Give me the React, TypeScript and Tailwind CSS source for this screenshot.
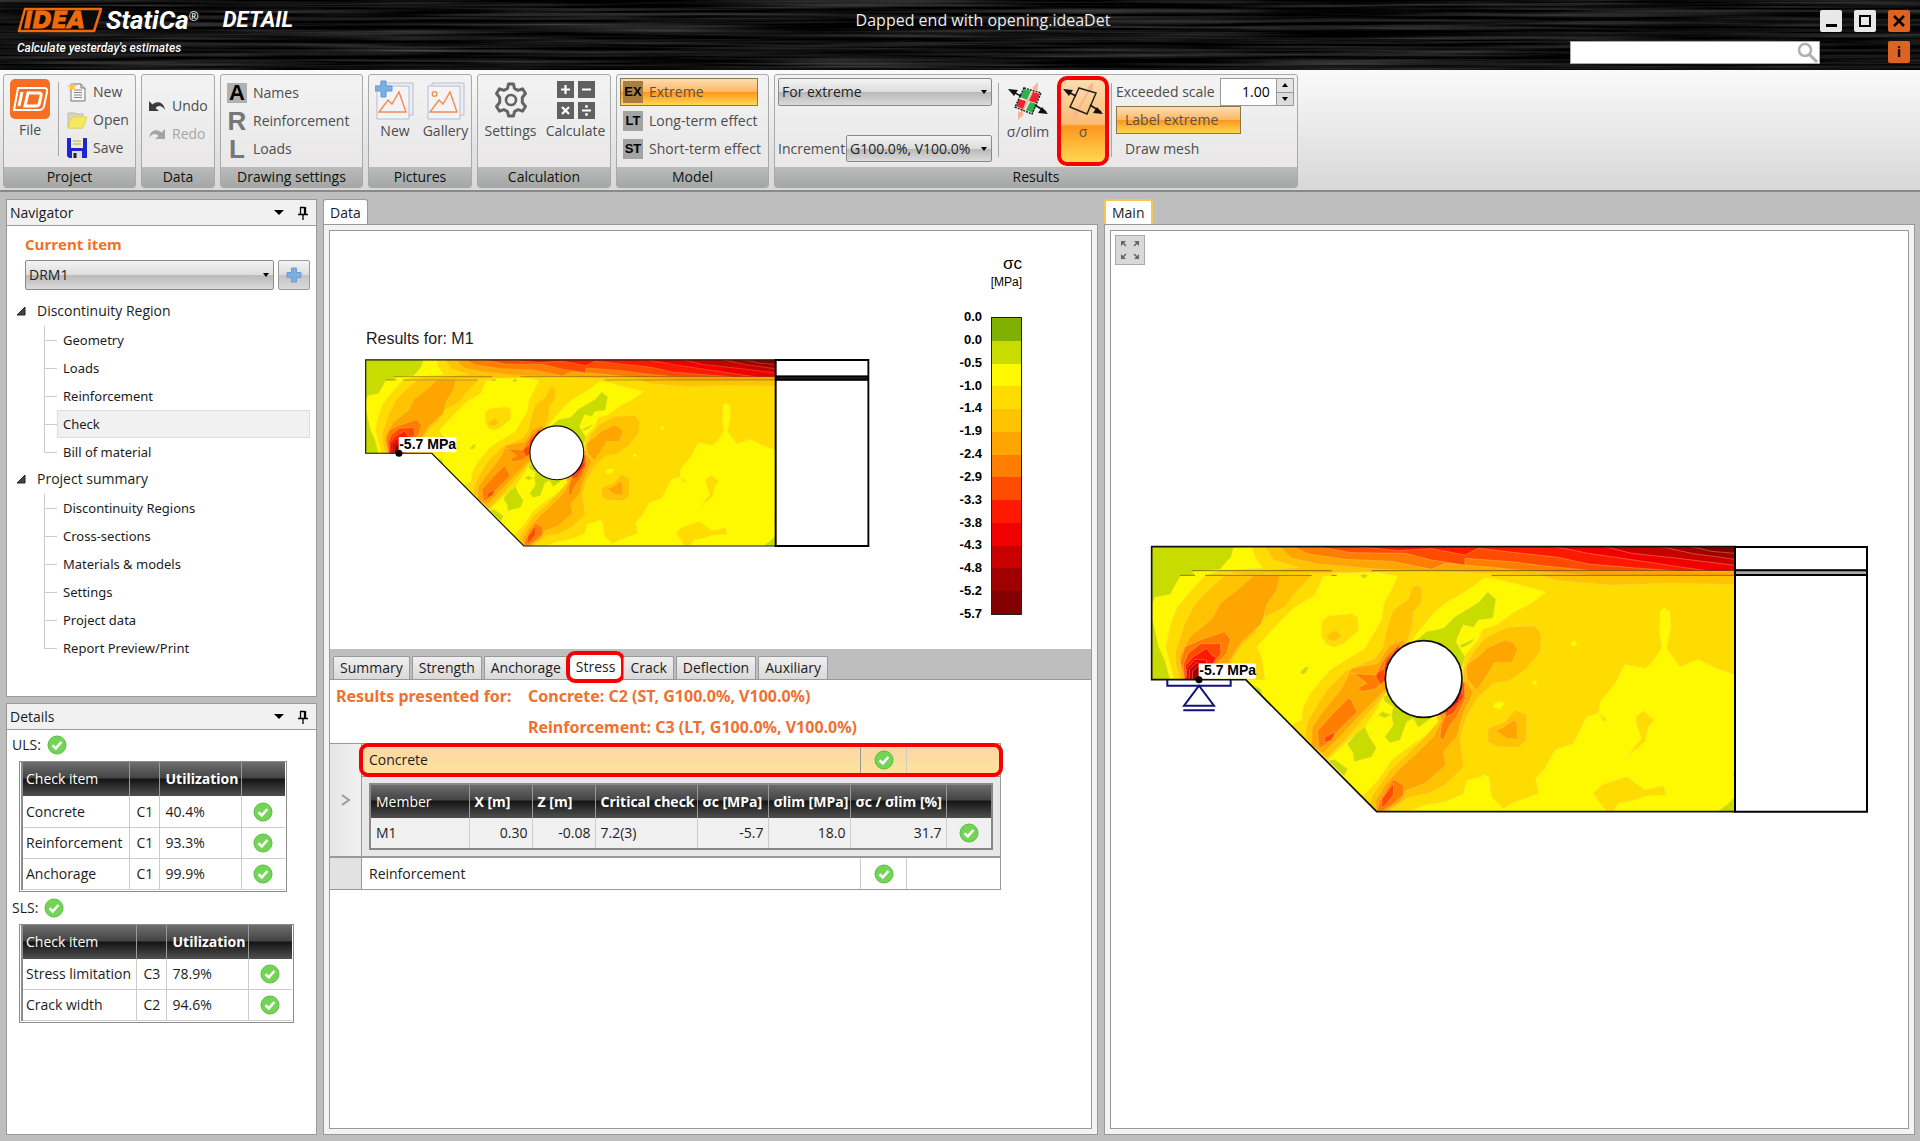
import { useState } from "react";
import type { ReactNode } from "react";

const LEGEND = [
  { value: "0.0", color: "#80b000" },
  { value: "0.0", color: "#c8dc00" },
  { value: "-0.5", color: "#fff900" },
  { value: "-1.0", color: "#ffdc00" },
  { value: "-1.4", color: "#ffc300" },
  { value: "-1.9", color: "#ffa500" },
  { value: "-2.4", color: "#ff7d00" },
  { value: "-2.9", color: "#ff4b00" },
  { value: "-3.3", color: "#ff1900" },
  { value: "-3.8", color: "#f00000" },
  { value: "-4.3", color: "#c80000" },
  { value: "-4.8", color: "#a00000" },
  { value: "-5.2", color: "#820000" },
  { value: "-5.7", color: "" },
];

// stress bands, painted in order from the base colour up to the peaks
const CONTOURS: [string, string[]][] = [
  [
    "#fff900",
    [
      "20,20 322,20 330,50 355,84 225,92 180,107 135,155 95,205 75,260 62,320 75,370 88,419 20,419",
      "535,108 510,165 450,200 385,265 335,320 350,350 360,419 302,419 438,556 470,540 475,500 500,455 555,390 620,350 660,325 690,275 710,240 718,190 740,150 758,108 700,96 570,92 560,108",
      "545,664 600,610 660,560 700,500 720,460 836,417 900,520 860,575 800,615 740,660 700,720 660,762 645,768",
      "790,320 815,280 870,215 900,190 960,155 1020,112 1060,118 1205,155 1160,190 1110,215 1055,255 1012,268 1000,300 960,345 950,420 836,417",
      "1770,405 1715,385 1660,358 1605,380 1565,325 1578,260 1575,215 1556,203 1545,215 1543,280 1550,325 1520,368 1500,385 1440,373 1410,430 1365,485 1360,520 1325,530 1285,610 1230,630 1200,685 1172,715 1180,760 1100,790 1075,806 1040,770 1032,712 1020,703 1005,712 965,720 955,762 900,785 840,795 790,815 1770,815",
    ],
  ],
  [
    "#c8dc00",
    [
      "20,20 266,20 258,50 225,88 142,94 148,104 106,108 75,163 30,172 20,195",
      "20,235 30,270 40,318 60,362 75,419 20,419",
      "800,312 845,275 895,265 930,230 975,203 1000,188 1028,156 1053,178 1043,235 1000,240 985,262 955,254 945,275 933,305 950,335 960,350 950,385 836,417",
      "945,316 990,295 975,312 950,323",
      "714,470 720,485 745,500 740,525 745,555 720,590 735,608 765,600 785,545 805,535 820,562 840,548 870,525 836,417",
      "607,612 635,580 660,560 672,590 694,622 680,650 627,665 625,640",
      "550,662 568,658 608,687 598,708",
      "466,397 480,382 491,380 483,398 470,403",
      "645,107 657,101 669,107 657,116",
      "700,525 714,514 722,520 738,524 718,533",
      "330,438 346,446 352,460 345,466",
      "1770,770 1745,795 1717,815 1770,815",
      "1770,690 1764,705 1770,720",
    ],
  ],
  [
    "#ffdc00",
    [
      "530,245 550,228 575,225 620,222 638,232 640,272 595,310 565,322 545,312 530,290",
      "1345,760 1370,735 1445,710 1500,750 1555,738 1563,765 1500,768 1470,780 1420,790 1405,815 1385,815",
      "1472,530 1496,512 1527,540 1510,560 1500,605 1450,645 1490,595 1475,555",
      "1362,522 1378,530 1385,543 1375,542",
    ],
  ],
  [
    "#ffc300",
    [
      "360,20 385,60 460,82 340,94 232,94 300,104 840,93 1040,100 1180,104 1240,122 1400,135 1560,130 1770,133 1770,20",
      "240,107 190,150 150,192 120,250 92,330 92,370 105,419 300,419 255,372 290,315 330,280 345,240 420,200 450,160 500,107",
      "480,590 488,545 520,490 545,450 600,395 690,355 715,320 722,280 745,210 788,180 803,142 820,135 832,150 828,190 805,215 800,265 785,308 836,417 720,462 660,530 600,600 545,655",
      "675,793 680,770 735,690 790,640 830,600 880,545 836,417 955,420 958,385 985,335 1020,295 1085,262 1170,258 1190,285 1185,335 1145,385 1090,423 1045,430 1000,470 965,530 945,590 950,640 957,680 900,735 850,760 790,772 730,815 695,815",
      "1145,525 1110,510 1080,545 1030,565 1028,605 1055,620 1120,622 1145,600",
      "545,285 575,270 590,290 565,304 547,298",
    ],
  ],
  [
    "#ffa500",
    [
      "405,20 440,55 520,72 700,88 840,92 1150,94 1350,106 1770,107 1770,20",
      "325,107 280,148 225,190 203,235 135,290 103,350 112,419 230,419 245,375 290,305 350,250 365,195 395,150 405,107",
      "498,615 502,560 530,520 590,445 620,385 700,370 715,345 735,315 775,300 836,417 715,455 650,520 580,595 535,640",
      "695,813 690,785 720,735 765,685 820,635 865,590 890,540 836,417 965,425 985,455 955,520 935,590 895,635 903,675 840,730 785,750 765,785 720,815",
      "965,375 1000,350 1025,325 1078,300 1105,308 1118,328 1100,368 1048,368 1030,400 995,450 965,415",
      "1052,572 1075,562 1105,540 1116,545 1118,598 1085,595",
    ],
  ],
  [
    "#ff7d00",
    [
      "445,20 490,42 600,58 740,64 860,88 900,70 1040,82 1150,93 1770,93 1770,20",
      "120,419 106,365 120,320 165,300 238,275 257,298 245,340 210,375 200,419",
      "522,625 518,572 560,525 612,472 622,485 636,516 590,560 545,612",
      "638,444 665,430 630,402 618,400 690,405 722,350 762,312 836,417 716,425 690,447 650,455",
      "695,813 705,780 745,718 775,735 775,765 740,795 712,813",
      "885,590 888,560 900,525 836,417 960,425 962,475 935,530 915,555 905,575 895,602",
    ],
  ],
  [
    "#ff4b00",
    [
      "520,20 620,38 780,40 860,60 960,75 960,55 1100,65 1200,78 1340,92 1770,92 1770,20",
      "118,419 116,372 130,340 165,312 226,310 228,340 205,375 190,419",
      "538,592 572,575 560,600 540,608",
      "692,410 700,395 715,388 722,360 760,318 836,417 716,425 706,434",
      "708,803 712,775 746,730 745,765 722,795",
      "903,530 900,515 836,417 958,430 958,470 925,520",
    ],
  ],
  [
    "#ff1900",
    [
      "640,20 760,32 860,26 960,45 1000,25 1130,40 1240,52 1330,72 1500,86 1600,93 1770,93 1770,20",
      "120,419 122,375 145,350 185,325 200,345 214,352 200,380 180,419",
      "718,400 720,372 752,330 836,417",
      "905,518 836,417 952,440 952,470 930,500",
    ],
  ],
  [
    "#f00000",
    ["1230,20 1330,40 1480,62 1600,80 1690,93 1770,93 1770,20", "123,419 126,385 150,358 185,360 182,419", "722,380 745,340 836,417", "912,510 836,417 950,455 940,485"],
  ],
  ["#c80000", ["1380,20 1460,40 1600,55 1770,76 1770,20", "132,419 134,388 155,368 178,375 176,419"]],
  ["#a00000", ["1550,20 1640,40 1770,58 1770,20", "142,419 143,392 160,378 172,385 170,419"]],
  ["#820000", ["1640,20 1700,34 1770,40 1770,20"]],
];

type BeamProps = {
  id: string;
  width: number;
  height: number;
  fontSize: number;
  support?: boolean;
};

const BeamPlot = ({ id, width, height, fontSize, support }: BeamProps) => (
  <svg width={width} height={height} viewBox="0 0 2190 840" className="shrink-0">
    <defs>
      <clipPath id={id}>
        <path d="M20 20H1770V815H695L302 419H20Z" />
      </clipPath>
    </defs>
    <g clipPath={`url(#${id})`}>
      <rect width="1790" height="840" fill="#ffdc00" />
      {CONTOURS.map(([color, shapes]) => (
        <g key={color + shapes.length} fill={color} stroke="#ffd480" strokeOpacity=".55" strokeWidth="2">
          {shapes.map((points) => (
            <polygon key={points} points={points} />
          ))}
        </g>
      ))}
      <g fill="#fff900">
        <path d="M1048 490L1065 484L1080 488L1065 508L1045 503Z" />
        <circle cx="1286" cy="310" r="8" />
        <circle cx="1169" cy="428" r="7" />
      </g>
      <path d="M142 92H560M680 92H1770M106 106H150M180 106H500M560 106H575M1040 106H1770" stroke="#3d3a00" strokeOpacity=".6" strokeWidth="3" />
    </g>
    <path d="M20 20H1770V815H695L302 419H20Z" fill="none" stroke="#111" strokeWidth="5" />
    <circle cx="836" cy="417" r="115" fill="#fff" stroke="#111" strokeWidth="5" />
    <rect x="1770" y="88" width="396" height="19" fill={support ? "#aaa" : "#222"} />
    <path d="M1770 21H2166V815H1770ZM1770 91H2166M1770 105H2166" fill="none" stroke="#000" strokeWidth={support ? 6 : 8} />
    {support && (
      <path
        d="M67 420V437H257V420M162 437L117 497H207ZM115 511H209"
        fill="none"
        stroke="#10107c"
        strokeWidth="6"
      />
    )}
    <rect x="161" y={419 - fontSize * 1.15} width={fontSize * 4.1} height={fontSize * 1.08} fill="#fff" rx="4" />
    <circle cx="162" cy="419" r={fontSize / 4} />
    <text x="163" y={419 - fontSize * 0.3} fontSize={fontSize} fontWeight="700" fontFamily="Liberation Sans, sans-serif">
      -5.7 MPa
    </text>
  </svg>
);

const CheckIcon = () => (
  <svg width="20" height="20" viewBox="0 0 20 20" className="inline-block shrink-0">
    <circle cx="10" cy="10" r="9" fill="#74d455" stroke="#55bf43" />
    <path d="M5.5 10.2L8.8 13.4L14.4 7" fill="none" stroke="#fff" strokeWidth="2.6" />
  </svg>
);

const PlusIcon = ({ size = 16 }: { size?: number }) => (
  <svg width={size} height={size} viewBox="0 0 16 16">
    <path d="M5.5 1H10.5V5.5H15V10.5H10.5V15H5.5V10.5H1V5.5H5.5Z" fill="#7fadde" stroke="#6d9dd2" />
  </svg>
);

const PinIcon = () => (
  <svg width="12" height="14" viewBox="0 0 12 14">
    <path d="M3.5 1V8M3 1.5H8M7.5 1V8M8.5 1V8M1 8.5H11M6 9V14" stroke="#000" strokeWidth="1.3" fill="none" />
  </svg>
);

const NewIcon = () => (
  <svg width="20" height="20" viewBox="0 0 20 20">
    <path d="M4 2H14L18 6V19H4Z" fill="#f6f6f6" stroke="#777" />
    <path d="M14 2V6H18" fill="#ddd" stroke="#777" />
    <path d="M7 8H15M7 10.5H15M7 13H15M7 15.5H15" stroke="#888" />
    <path d="M5 0L6.2 3.2L10 3L7.2 5.4L8.6 9L5 7L1.6 9L2.8 5.4L0 3L3.8 3.2Z" fill="#ffc83c" />
  </svg>
);

const OpenIcon = () => (
  <svg width="20" height="20" viewBox="0 0 20 20">
    <path d="M1 3H8L9 4H16V18H1Z" fill="#d9d7c4" stroke="#bbb9a8" />
    <path d="M5 7H20L16 18H1Z" fill="#f6e960" stroke="#e6d640" />
  </svg>
);

const SaveIcon = () => (
  <svg width="20" height="20" viewBox="0 0 20 20">
    <path d="M0 0H20V20H2L0 18Z" fill="#2026cf" />
    <path d="M4 0H16V10H4Z" fill="#f2efc4" />
    <path d="M6 3H14M6 6H14" stroke="#a8a68c" />
    <path d="M5 13H15V20H5Z" fill="#ddd" />
    <path d="M6.500 15H9.500V20H6.500Z" fill="#222" />
  </svg>
);

const UndoIcon = ({ flip }: { flip?: boolean }) => (
  <svg width="18" height="14" viewBox="0 0 18 14" className={flip ? "-scale-x-100" : ""}>
    <path d="M1 2V12H11L7.500 9C10 6 14 6 17 11C16 3 9 1 4.500 5.500Z" fill={flip ? "#a3a3a3" : "#3c3c3c"} />
  </svg>
);

const PictureIcon = ({ add }: { add?: boolean }) => (
  <svg width="40" height="40" viewBox="0 0 40 40">
    <path d="M6 3H38V35H6Z" fill="#eceef5" stroke="#b9bccd" />
    <path d="M2 6H34V39H2Z" fill="#f4f4f8" stroke="#b9bccd" />
    <path d="M4 32L13 20L17 24L24 12L31 32Z" fill="none" stroke="#f58a4b" strokeWidth="1.4" />
    {!add && <circle cx="8.500" cy="14" r="2.300" fill="none" stroke="#f58a4b" strokeWidth="1.300" />}
    {add && <path d="M6 1H11V6H17V11H11V17H6V11H0V6H6Z" fill="#7cb0e4" stroke="#5f97d0" />}
  </svg>
);

const GearIcon = () => (
  <svg width="34" height="36" viewBox="0 0 34 36">
    <path
      d="M14.500 2H19.500L20.500 6.500L24 8.300L28.500 6.800L31.500 11.500L28.300 15.500V20.500L31.500 24.500L28.500 29.200L24 27.700L20.500 29.500L19.500 34H14.500L13.500 29.500L10 27.700L5.500 29.200L2.500 24.500L5.700 20.500V15.500L2.500 11.500L5.500 6.800L10 8.300L13.500 6.500Z"
      fill="none"
      stroke="#636363"
      strokeWidth="3"
      strokeLinejoin="round"
    />
    <circle cx="17" cy="18" r="5" fill="none" stroke="#636363" strokeWidth="2.600" />
  </svg>
);

const CalcIcon = () => (
  <svg width="38" height="38" viewBox="0 0 38 38">
    <path d="M0 0H17V17H0ZM21 0H38V17H21ZM0 21H17V38H0ZM21 21H38V38H21Z" fill="#606060" />
    <path d="M4 8.500H13M8.500 4V13M25 8.500H34M5 26L12 33M12 26L5 33M25 29.500H34" stroke="#fff" strokeWidth="2.200" />
    <circle cx="29.500" cy="25.500" r="1.400" fill="#fff" />
    <circle cx="29.500" cy="33.500" r="1.400" fill="#fff" />
  </svg>
);

const StressIcon = ({ filled }: { filled?: boolean }) => (
  <svg width="40" height="38" viewBox="0 0 40 38">
    <path d="M11 35L29 3" stroke="#f9b395" strokeWidth="2" />
    <path d="M30 0L29.500 9L24 6ZM10 38L10 29L16 32Z" fill="#f9b395" />
    {filled && (
      <g>
        <path d="M16 7L23 9L19 18L12 15ZM22 20L29 22L25 31L18 28Z" fill="#2eb24c" />
        <path d="M25 10L32 12L28 21L21 19ZM11 17L18 19L15 27L8 24Z" fill="#ee2430" />
      </g>
    )}
    <path d="M16 6L33 11L24 32L7 25Z" fill="none" stroke="#222" strokeWidth="1.500" strokeDasharray={filled ? "2 1" : undefined} />
    <path d="M3 9L13 14M27 23L38 30" stroke="#111" strokeWidth="1.500" />
    <path d="M0 7L10 8L6 14ZM40 32L30 31L34 25Z" fill="#111" />
  </svg>
);

const Group = ({ title, children, className = "" }: { title: string; children: ReactNode; className?: string }) => (
  <section className="flex flex-col rounded-[3px] border border-[#a9a9a9] bg-linear-to-b from-[#f3f3f3] to-[#e7e5e5] overflow-hidden">
    <div className={`flex h-[92px] ${className}`}>{children}</div>
    <h2 className="h-[20px] bg-linear-to-b from-[#b9bcbb] to-[#a4a7a6] text-center text-[14px] leading-[19px] text-[#111]">
      {title}
    </h2>
  </section>
);

const SmallButton = ({ icon, label, disabled }: { icon: ReactNode; label: string; disabled?: boolean }) => (
  <button
    type="button"
    disabled={disabled}
    className="flex h-[28px] items-center gap-[6px] text-[#4c4c4c] disabled:text-[#a6a6a6]"
  >
    {icon}
    {label}
  </button>
);

const BigButton = ({ icon, label, className = "" }: { icon: ReactNode; label: string; className?: string }) => (
  <button type="button" className={`flex flex-col items-center text-[#4c4c4c] ${className}`}>
    <span className="flex h-[42px] items-center">{icon}</span>
    <span className="leading-[20px]">{label}</span>
  </button>
);

const Separator = () => <div className="my-[8px] h-[74px] w-px bg-[#a8a8a8]" />;

const Select = ({ label, value, className }: { label: string; value: string; className: string }) => (
  <div className={`relative ${className}`}>
    <select
      aria-label={label}
      className="h-full w-full appearance-none rounded-[2px] border border-[#8a8a8a] bg-[linear-gradient(#f4f4f4,#dcdcdc_50%,#b9b9b9_52%,#dadada)] pl-[3px] text-[14px] text-[#222]"
    >
      <option>{value}</option>
    </select>
    <span className="pointer-events-none absolute right-[5px] top-1/2 -mt-[2px] border-x-[3px] border-t-[4px] border-x-transparent border-t-black" />
  </div>
);

const ModelIcon = ({ code }: { code: string }) => (
  <span className="flex h-[20px] w-[20px] items-center justify-center bg-[#a3a3a3] font-['Liberation_Sans',sans-serif] text-[13px] font-bold text-black">
    {code}
  </span>
);

const LetterIcon = ({ letter, active }: { letter: string; active?: boolean }) => (
  <span
    className={`flex h-[20px] w-[20px] items-center justify-center font-['Liberation_Sans',sans-serif] font-bold leading-[20px] ${
      active ? "bg-[#b0b0b0] text-[22px] text-black" : "text-[26px] text-[#777]"
    }`}
  >
    {letter}
  </span>
);

const ORANGE =
  "border border-[#8c7746] bg-[linear-gradient(#fddcae,#fcb867_49%,#fd961f_51%,#ffd84f)]";

const Ribbon = () => (
  <div className="flex h-[122px] gap-[5px] border-b-2 border-[#8a8a8a] bg-linear-to-b from-[#fafafa] to-[#d8d8d8] px-[3px] pt-[4px] pb-0 text-[14px]">
    <div className="flex h-[114px] gap-[5px]">
      <Group title="Project" className="w-[131px] pl-[6px] pt-[3px]">
        <BigButton
          className="w-[40px]"
          label="File"
          icon={
            <svg width="40" height="40" viewBox="0 0 40 40">
              <rect width="40" height="40" rx="5" fill="#f36f21" />
              <path d="M8 9H34Q38 9 37 13L34 27Q33 31 29 31H4Z" fill="none" stroke="#fff" strokeWidth="2" />
              <path d="M12 13L9 27M18 14H29Q32 14 31 17L29.500 24Q29 27 26 27H15Z" fill="none" stroke="#fff" strokeWidth="3" />
            </svg>
          }
        />
        <div className="mx-[8px] mt-[4px] h-[74px] w-px bg-[#a8a8a8]" />
        <div>
          <SmallButton icon={<NewIcon />} label="New" />
          <SmallButton icon={<OpenIcon />} label="Open" />
          <SmallButton icon={<SaveIcon />} label="Save" />
        </div>
      </Group>
      <Group title="Data" className="w-[72px] flex-col pl-[6px] pt-[17px]">
        <SmallButton icon={<UndoIcon />} label="Undo" />
        <SmallButton icon={<UndoIcon flip />} label="Redo" disabled />
      </Group>
      <Group title="Drawing settings" className="w-[141px] flex-col pl-[6px] pt-[4px]">
        <SmallButton icon={<LetterIcon letter="A" active />} label="Names" />
        <SmallButton icon={<LetterIcon letter="R" />} label="Reinforcement" />
        <SmallButton icon={<LetterIcon letter="L" />} label="Loads" />
      </Group>
      <Group title="Pictures" className="w-[102px] pt-[4px] text-[14px]">
        <BigButton className="w-[52px]" icon={<PictureIcon add />} label="New" />
        <BigButton className="w-[49px]" icon={<PictureIcon />} label="Gallery" />
      </Group>
      <Group title="Calculation" className="w-[132px] pt-[4px]">
        <BigButton className="w-[65px]" icon={<GearIcon />} label="Settings" />
        <BigButton className="w-[65px]" icon={<CalcIcon />} label="Calculate" />
      </Group>
      <Group title="Model" className="w-[151px] flex-col gap-px pl-[3px] pt-[3px]">
        <button type="button" className={`flex h-[28px] w-[138px] items-center gap-[6px] pl-[2px] text-[#5c5142] ${ORANGE}`}>
          <span className="flex h-[22px] w-[20px] items-center justify-center bg-[#a77d44] font-['Liberation_Sans',sans-serif] text-[13px] font-bold text-black">
            EX
          </span>
          Extreme
        </button>
        <div className="pl-[3px]">
          <SmallButton icon={<ModelIcon code="LT" />} label="Long-term effect" />
          <SmallButton icon={<ModelIcon code="ST" />} label="Short-term effect" />
        </div>
      </Group>
      <Group title="Results" className="w-[522px] pl-[3px]">
        <div className="flex w-[214px] flex-col justify-between pt-[3px] pb-[5px]">
          <Select label="Result values" value="For extreme" className="h-[28px] w-full" />
          <div className="flex items-center justify-between text-[#4c4c4c]">
            Increment
            <Select label="Increment" value="G100.0%, V100.0%" className="h-[27px] w-[146px]" />
          </div>
        </div>
        <div className="w-[6px]" />
        <Separator />
        <BigButton className="w-[58px] pt-[5px]" icon={<StressIcon filled />} label="σ/σlim" />
        <button
          type="button"
          className="mt-[1px] flex h-[90px] w-[52px] flex-col items-center rounded-[10px] border-4 border-[#f60000] bg-[linear-gradient(#fddcae,#fcbc74_54%,#fd961f_56%,#ffd84f)] pt-[2px] text-[#5c5142]"
        >
          <StressIcon />
          <span className="mt-[2px] leading-[20px]">σ</span>
        </button>
        <div className="w-[2px]" />
        <Separator />
        <div className="flex flex-col pl-[4px] pt-[3px] text-[#4c4c4c]">
          <label className="flex h-[28px] items-center justify-between gap-[5px]">
            Exceeded scale
            <span className="flex h-[28px] w-[74px] border border-[#9a9a9a] bg-white">
              <input defaultValue="1.00" className="w-[55px] pr-[6px] text-right text-[14px] text-black" />
              <span className="flex w-[18px] flex-col gap-px border-l border-[#9a9a9a] bg-[#9a9a9a]">
                <button type="button" aria-label="Increase" className="flex flex-1 items-center justify-center bg-[#e4e4e4]">
                  <span className="border-x-[3px] border-b-[4px] border-x-transparent border-b-black" />
                </button>
                <button type="button" aria-label="Decrease" className="flex flex-1 items-center justify-center bg-[#dcdcdc]">
                  <span className="border-x-[3px] border-t-[4px] border-x-transparent border-t-black" />
                </button>
              </span>
            </span>
          </label>
          <button type="button" className={`h-[28px] w-[125px] pl-[8px] text-left text-[#5c5142] ${ORANGE}`}>
            Label extreme
          </button>
          <button type="button" className="h-[29px] pl-[9px] text-left">
            Draw mesh
          </button>
        </div>
      </Group>
    </div>
  </div>
);

const Header = () => (
  <header className="relative flex h-[70px] justify-between bg-black text-white">
    <svg className="absolute inset-0 h-full w-full" aria-hidden="true">
      <filter id="brushed" colorInterpolationFilters="sRGB">
        <feTurbulence type="fractalNoise" baseFrequency="0.004 0.3" numOctaves="3" seed="4" />
        <feColorMatrix values="0.46 0 0 0 -0.16  0.46 0 0 0 -0.16  0.46 0 0 0 -0.16  0 0 0 0 1" />
      </filter>
      <rect width="100%" height="100%" filter="url(#brushed)" />
    </svg>
    <div className="relative flex w-[396px] flex-col pl-[17px] pt-[7px]">
      <div className="flex items-start">
        <svg width="86" height="26" viewBox="0 0 86 26">
          <path d="M8 2H84L77 24H2Z" fill="#0b0b0b" stroke="#f06a0a" strokeWidth="2.500" strokeLinejoin="round" />
          <text x="7" y="21" fontSize="23" fontWeight="700" fontStyle="italic" fontFamily="DejaVu Sans, sans-serif" fill="#f06a0a" stroke="#f06a0a">
            IDEA
          </text>
        </svg>
        <span className="ml-[3px] font-[Roboto,sans-serif] text-[26px] font-bold italic leading-[26px]">StatiCa</span>
        <span className="text-[12px]">®</span>
        <span className="ml-[24px] font-[Roboto,sans-serif] text-[22px] font-bold italic leading-[26px]">DETAIL</span>
      </div>
      <p className="mt-[6px] font-[Roboto,sans-serif] text-[12px] font-medium italic leading-[18px]">
        Calculate yesterday's estimates
      </p>
    </div>
    <h1 className="relative pt-[10px] text-[16px] leading-[20px] text-[#ececec]">Dapped end with opening.ideaDet</h1>
    <div className="relative flex w-[350px] flex-col pr-[10px] pt-[10px]">
      <div className="flex justify-end gap-[12px]">
        <button type="button" aria-label="Minimize" className="flex h-[22px] w-[22px] items-end justify-center rounded-[2px] bg-[#e8e8e8] pb-[5px]">
          <span className="h-[3px] w-[11px] bg-black" />
        </button>
        <button type="button" aria-label="Maximize" className="flex h-[22px] w-[22px] items-center justify-center rounded-[2px] bg-[#e8e8e8]">
          <span className="h-[12px] w-[12px] border-2 border-black" />
        </button>
        <button type="button" aria-label="Close" className="flex h-[22px] w-[22px] items-center justify-center rounded-[2px] bg-[#de6320]">
          <svg width="12" height="12" viewBox="0 0 12 12">
            <path d="M1 1L11 11M11 1L1 11" stroke="#000" strokeWidth="2.500" />
          </svg>
        </button>
      </div>
      <div className="mt-[9px] flex justify-between">
        <div className="relative">
          <input aria-label="Search" className="h-[23px] w-[250px] border border-[#a8a8b0] bg-white px-1 text-black" />
          <svg width="22" height="22" viewBox="0 0 22 22" className="absolute right-px top-px">
            <circle cx="8" cy="8" r="6" fill="none" stroke="#b0b0b0" strokeWidth="2.500" />
            <path d="M12.500 12.500L20 20" stroke="#b0b0b0" strokeWidth="3" />
          </svg>
        </div>
        <button type="button" aria-label="Info" className="flex h-[22px] w-[22px] items-center justify-center rounded-[2px] bg-[#de6320] text-[14px] font-bold text-black">
          i
        </button>
      </div>
    </div>
  </header>
);

const PanelTitle = ({ title }: { title: string }) => (
  <div className="flex h-[26px] shrink-0 items-center justify-between border-b border-[#999] bg-[#f1f1f1] pl-[3px] pr-[7px]">
    <h2>{title}</h2>
    <div className="flex items-center gap-[13px]">
      <span className="border-x-[5px] border-t-[5px] border-x-transparent border-t-black" />
      <PinIcon />
    </div>
  </div>
);

const TREE = [
  {
    title: "Discontinuity Region",
    items: ["Geometry", "Loads", "Reinforcement", "Check", "Bill of material"],
  },
  {
    title: "Project summary",
    items: ["Discontinuity Regions", "Cross-sections", "Materials & models", "Settings", "Project data", "Report Preview/Print"],
  },
];

const Navigator = () => {
  const [selected, setSelected] = useState("Check");
  return (
    <section className="flex min-h-0 flex-[498] flex-col border border-[#999] bg-white">
      <PanelTitle title="Navigator" />
      <h3 className="pl-[18px] pt-[7px] text-[15px] font-bold leading-[22px] text-[#f36f21]">Current item</h3>
      <div className="flex gap-[4px] pl-[18px] pr-[6px] pt-[5px]">
        <Select label="Current item" value="DRM1" className="h-[30px] flex-1" />
        <button type="button" aria-label="Add item" className="flex h-[30px] w-[32px] items-center justify-center rounded-[2px] border border-[#9a9a9a] bg-[linear-gradient(#f4f4f4,#dcdcdc_50%,#c4c4c4_52%,#dadada)]">
          <PlusIcon />
        </button>
      </div>
      <div className="pt-[8px]">
        {TREE.map((group) => (
          <div key={group.title}>
            <div className="flex h-[26px] items-center gap-[11px] pl-[9px]">
              <svg width="10" height="10" viewBox="0 0 10 10">
                <path d="M9 1V9H1Z" fill="#444" stroke="#222" />
              </svg>
              {group.title}
            </div>
            <ul className="pt-[2px] font-['Noto_Sans',sans-serif] text-[13px]">
              {group.items.map((item, i) => (
                <li key={item} className="flex h-[28px] items-stretch pl-[37px] pr-[6px]">
                  <span className="flex w-[13px] flex-col">
                    <span className="flex-1 border-b border-l border-[#ccc]" />
                    <span className={i < group.items.length - 1 ? "flex-1 border-l border-[#ccc]" : "flex-1"} />
                  </span>
                  <button
                    type="button"
                    onClick={() => setSelected(item)}
                    className={`flex-1 border pl-[5px] text-left ${
                      selected === item ? "border-[#ddd] bg-[#f1f1f2]" : "border-transparent"
                    }`}
                  >
                    {item}
                  </button>
                </li>
              ))}
            </ul>
          </div>
        ))}
      </div>
    </section>
  );
};

const DARK = "bg-[linear-gradient(#6e6e6e,#444_47%,#141414_50%,#505050)] text-white";

const CheckTable = ({ rows, cols }: { rows: string[][]; cols: string }) => (
  <div className="ml-[12px] mt-[6px] w-fit border border-[#8c8c8c] pb-px pl-px pr-px">
    <table className={`table-fixed border-collapse border-l-2 border-[#8c8c8c] ${cols}`}>
      <thead>
        <tr className={`h-[34px] text-left ${DARK}`}>
          <th className="border-r border-[#999] pl-[3px] font-normal">Check item</th>
          <th className="w-[30px] border-r border-[#999]" />
          <th className="w-[82px] border-r border-[#999] pl-[6px] font-bold">Utilization</th>
          <th className="w-[44px]" />
        </tr>
      </thead>
      <tbody>
        {rows.map(([name, code, value]) => (
          <tr key={name} className="h-[31px] border-b border-[#ccc]">
            <td className="whitespace-nowrap border-r border-[#ccc] pl-[3px]">{name}</td>
            <td className="border-r border-[#ccc] pl-[7px]">{code}</td>
            <td className="border-r border-[#ccc] pl-[6px]">{value}</td>
            <td>
              <span className="flex justify-center">
                <CheckIcon />
              </span>
            </td>
          </tr>
        ))}
      </tbody>
    </table>
  </div>
);

const Details = () => (
  <section className="flex min-h-0 flex-[431] flex-col border border-[#999] bg-white">
    <PanelTitle title="Details" />
    <div className="flex items-center gap-[6px] pl-[5px] pt-[5px]">
      ULS: <CheckIcon />
    </div>
    <CheckTable
      cols="w-[264px]"
      rows={[
        ["Concrete", "C1", "40.4%"],
        ["Reinforcement", "C1", "93.3%"],
        ["Anchorage", "C1", "99.9%"],
      ]}
    />
    <div className="flex items-center gap-[6px] pl-[5px] pt-[6px]">
      SLS: <CheckIcon />
    </div>
    <CheckTable
      cols="w-[271px]"
      rows={[
        ["Stress limitation", "C3", "78.9%"],
        ["Crack width", "C2", "94.6%"],
      ]}
    />
  </section>
);

const Legend = () => (
  <div className="flex w-[80px] flex-col items-end font-['Liberation_Sans',sans-serif] text-black">
    <div className="text-[17px] leading-[20px]">σc</div>
    <div className="text-[12px] leading-[16px]">[MPa]</div>
    <div className="flex gap-[9px] pt-[17px]">
      <ul className="flex h-[317px] flex-col justify-between text-right text-[13px] font-bold leading-[20px]">
        {LEGEND.map((entry, i) => (
          <li key={i}>{entry.value}</li>
        ))}
      </ul>
      <div className="mt-[10px] flex h-[298px] w-[31px] flex-col border border-[#222]">
        {LEGEND.slice(0, 13).map((entry, i) => (
          <div key={i} className="flex-1" style={{ background: entry.color }} />
        ))}
      </div>
    </div>
  </div>
);

const TABS = ["Summary", "Strength", "Anchorage", "Stress", "Crack", "Deflection", "Auxiliary"];

const ResultTabs = () => {
  const [active, setActive] = useState("Stress");
  return (
    <div role="tablist" className="flex h-[31px] items-end gap-[2px] border-b border-[#999] bg-[#bebebe] pl-[3px]">
      {TABS.map((tab) => (
        <button
          key={tab}
          type="button"
          role="tab"
          aria-selected={active === tab}
          onClick={() => setActive(tab)}
          className={
            active === tab
              ? "-mx-[4px] -mb-[4px] h-[32px] rounded-[9px] border-4 border-[#f60000] bg-white px-[6px]"
              : "h-[23px] rounded-t-[2px] border border-b-0 border-[#999] bg-linear-to-b from-[#f0f0f0] to-[#d9d9d9] px-[6px] leading-[20px]"
          }
        >
          {tab}
        </button>
      ))}
    </div>
  );
};

const HEAD = ["X [m]", "Z [m]", "Critical check", "σc [MPa]", "σlim [MPa]", "σc / σlim [%]"];

const StressTable = () => (
  <table className="w-[622px] table-fixed border-collapse border-2 border-[#888] bg-[#f0f0f0]">
    <colgroup>
      <col className="w-[99px]" />
      <col className="w-[63px]" />
      <col className="w-[63px]" />
      <col className="w-[102px]" />
      <col className="w-[71px]" />
      <col className="w-[82px]" />
      <col className="w-[96px]" />
      <col className="w-[46px]" />
    </colgroup>
    <thead>
      <tr className={`h-[34px] text-left ${DARK}`}>
        <th className="border-r border-[#999] pl-[5px] font-normal">Member</th>
        {HEAD.map((head) => (
          <th key={head} className="whitespace-nowrap border-r border-[#999] pl-[5px] font-bold">
            {head}
          </th>
        ))}
        <th />
      </tr>
    </thead>
    <tbody>
      <tr className="h-[31px] border-b border-[#ccc] text-right">
        <td className="border-r border-[#ccc] pl-[5px] text-left">M1</td>
        <td className="border-r border-[#ccc] pr-[4px]">0.30</td>
        <td className="border-r border-[#ccc] pr-[4px]">-0.08</td>
        <td className="border-r border-[#ccc] pl-[5px] text-left">7.2(3)</td>
        <td className="border-r border-[#ccc] pr-[4px]">-5.7</td>
        <td className="border-r border-[#ccc] pr-[4px]">18.0</td>
        <td className="border-r border-[#ccc] pr-[4px]">31.7</td>
        <td>
          <span className="flex justify-center">
            <CheckIcon />
          </span>
        </td>
      </tr>
    </tbody>
  </table>
);

const ResultGrid = () => (
  <div className="w-[671px] border border-[#999] border-l-0">
    <div className="flex">
      <div className="flex w-[32px] items-center justify-center border-r border-[#999] bg-linear-to-r from-[#e6e6e6] to-[#f0f0f0]">
        <svg width="10" height="12" viewBox="0 0 10 12">
          <path d="M1 1L8 6L1 11" fill="none" stroke="#999" strokeWidth="2" />
        </svg>
      </div>
      <div className="flex-1">
        <div className="relative flex h-[32px] items-stretch bg-linear-to-b from-[#fdd3a6] to-[#fde69c]">
          <div className="flex flex-1 items-center border-r border-[#999] pl-[7px]">Concrete</div>
          <div className="flex w-[46px] items-center justify-center border-r border-[#ccc]">
            <CheckIcon />
          </div>
          <div className="w-[93px]" />
          <div className="absolute -inset-x-[3px] -inset-y-px rounded-[9px] border-4 border-[#f60000]" />
        </div>
        <div className="border-t border-[#999] bg-[#e8e8e8] p-[7px] pb-[6px] pt-[6px]">
          <StressTable />
        </div>
      </div>
    </div>
    <div className="flex h-[33px] border-t-2 border-[#999]">
      <div className="w-[32px] border-r border-[#999] bg-[#e2e2e2]" />
      <div className="flex flex-1 items-center border-r border-[#ccc] pl-[7px]">Reinforcement</div>
      <div className="flex w-[46px] items-center justify-center border-r border-[#ccc]">
        <CheckIcon />
      </div>
      <div className="w-[93px]" />
    </div>
  </div>
);

const DockWindow = ({ title, active, className, children }: { title: string; active?: boolean; className: string; children: ReactNode }) => (
  <section className={`flex min-w-0 flex-col ${className}`}>
    <div
      className={`-mb-px flex h-[26px] w-fit items-center rounded-t-[3px] border border-b-0 bg-white px-[6px] ${
        active ? "border-2 border-[#f5c84c]" : "border-[#999]"
      }`}
    >
      {title}
    </div>
    <div className="flex min-h-0 flex-1 border border-[#999] bg-[#f3f3f3] p-[5px]">
      <div className="min-w-0 flex-1 border border-[#999] bg-white">{children}</div>
    </div>
  </section>
);

const App = () => (
  <div className="flex h-screen flex-col overflow-hidden bg-[#bebebe] font-['Open_Sans',sans-serif] text-[14px] leading-[20px] text-[#1c1c1c]">
    <Header />
    <Ribbon />
    <main className="flex min-h-0 flex-1 gap-[6px] pb-[6px] pl-[6px] pr-[5px] pt-[7px]">
      <aside className="flex w-[311px] shrink-0 flex-col gap-[6px]">
        <Navigator />
        <Details />
      </aside>
      <DockWindow title="Data" className="flex-[775]">
        <div className="flex h-[418px] justify-between pl-[31px] pr-[69px] pt-[23px]">
          <div className="flex flex-col gap-[4px] pt-[73px]">
            <div className="pl-[5px] font-['Liberation_Sans',sans-serif] text-[16px] leading-[24px]">Results for: M1</div>
            <BeamPlot id="beam-data" width={513} height={197} fontSize={60} />
          </div>
          <Legend />
        </div>
        <ResultTabs />
        <div className="grid grid-cols-[192px_1fr] pl-[6px] pt-[4px] font-['Noto_Sans',sans-serif] text-[16px] font-bold text-[#f07030]">
          <div className="leading-[24px]">Results presented for:</div>
          <div className="leading-[24px]">Concrete: C2 (ST, G100.0%, V100.0%)</div>
          <div />
          <div className="pb-[4px] pt-[7px] leading-[24px]">Reinforcement: C3 (LT, G100.0%, V100.0%)</div>
        </div>
        <ResultGrid />
      </DockWindow>
      <DockWindow title="Main" active className="flex-[811]">
        <div className="flex flex-col pl-[4px] pt-[4px]">
          <button type="button" aria-label="Zoom to fit" className="flex h-[30px] w-[30px] items-center justify-center border border-[#aaa] bg-[#d8d8d8]">
            <svg width="20" height="20" viewBox="0 0 20 20">
              <path d="M1 1H6L1 6ZM19 1V6L14 1ZM1 19V14L6 19ZM19 19H14L19 14Z" fill="#666" />
              <path d="M2 2L6 6M18 2L14 6M2 18L6 14M18 18L14 14" stroke="#666" strokeWidth="1.500" />
            </svg>
          </button>
          <div className="pl-[30px] pt-[275px]">
            <BeamPlot id="beam-main" width={730} height={280} fontSize={42} support />
          </div>
        </div>
      </DockWindow>
    </main>
  </div>
);

export default App;
